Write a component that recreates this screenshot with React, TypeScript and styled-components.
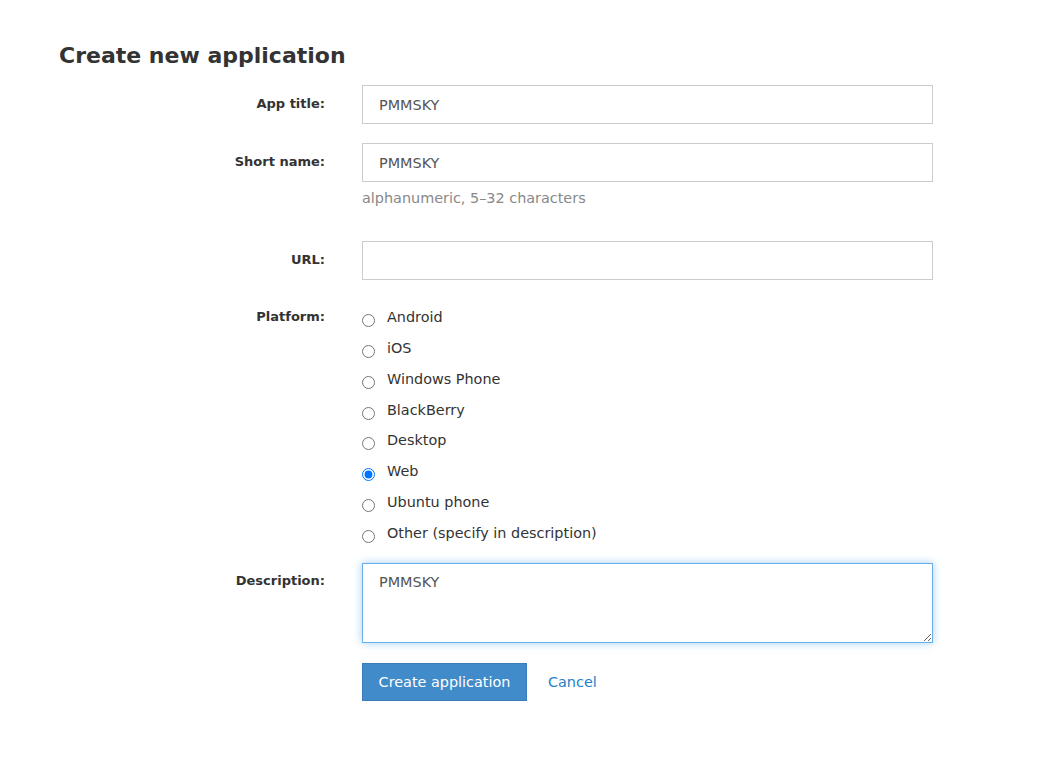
import React from "react";
import styled, { createGlobalStyle } from "styled-components";

const Global = createGlobalStyle`
  html, body { margin: 0; padding: 0; background: #fff; }
  body {
    font-family: "DejaVu Sans", Verdana, sans-serif;
    font-size: 14.4px;
    color: #333;
  }
  * { box-sizing: border-box; }
`;

const Page = styled.div`
  padding: 41px 0 40px 0;
`;

const Title = styled.h1`
  margin: 0 0 14px 59px;
  font-size: 22px;
  line-height: 30px;
  font-weight: bold;
  color: #333;
`;

const Form = styled.form`
  display: flex;
  flex-direction: column;
`;

const Row = styled.div<{ $mb: number }>`
  display: grid;
  grid-template-columns: 325px 571px;
  column-gap: 37px;
  margin-bottom: ${(p) => p.$mb}px;
`;

const Label = styled.label<{ $pt: number }>`
  text-align: right;
  font-weight: bold;
  font-size: 13px;
  padding-top: ${(p) => p.$pt}px;
  line-height: 20px;
  color: #333;
`;

const Field = styled.div`
  display: flex;
  flex-direction: column;
`;

const TextInput = styled.input`
  width: 100%;
  height: 39px;
  border: 1px solid #ccc;
  border-radius: 0;
  padding: 0 16px;
  font: inherit;
  color: #555;
  outline: none;
  background: #fff;
`;

const Hint = styled.div`
  margin-top: 6px;
  line-height: 20px;
  color: #888;
`;

const Radios = styled.div`
  display: flex;
  flex-direction: column;
`;

const RadioRow = styled.label`
  display: flex;
  align-items: flex-start;
  height: 30.86px;
  line-height: 20px;
  color: #333;
  cursor: pointer;
`;

const Radio = styled.input`
  margin: 7px 12px 0 0;
  width: 13px;
  height: 13px;
  flex: none;
`;

const TextArea = styled.textarea`
  width: 100%;
  height: 80px;
  border: 1px solid #66afe9;
  box-shadow: 0 0 8px rgba(102, 175, 233, 0.6);
  border-radius: 0;
  padding: 8px 16px;
  font: inherit;
  line-height: 20px;
  color: #555;
  outline: none;
  resize: vertical;
  display: block;
`;

const Actions = styled.div`
  display: flex;
  align-items: center;
  gap: 21px;
`;

const PrimaryButton = styled.button`
  height: 38px;
  width: 165px;
  background: #428bca;
  border: 1px solid #3a7db8;
  color: #fff;
  font: inherit;
  padding: 0 15px;
  cursor: pointer;
`;

const CancelLink = styled.a`
  color: #2481cc;
  text-decoration: none;
`;

const platforms = [
  "Android",
  "iOS",
  "Windows Phone",
  "BlackBerry",
  "Desktop",
  "Web",
  "Ubuntu phone",
  "Other (specify in description)",
];

export default function App() {
  return (
    <Page>
      <Global />
      <Title>Create new application</Title>
      <Form onSubmit={(e) => e.preventDefault()}>
        <Row $mb={19}>
          <Label $pt={9}>App title:</Label>
          <Field>
            <TextInput defaultValue="PMMSKY" />
          </Field>
        </Row>
        <Row $mb={33}>
          <Label $pt={9}>Short name:</Label>
          <Field>
            <TextInput defaultValue="PMMSKY" />
            <Hint>alphanumeric, 5–32 characters</Hint>
          </Field>
        </Row>
        <Row $mb={27}>
          <Label $pt={9}>URL:</Label>
          <Field>
            <TextInput defaultValue="" />
          </Field>
        </Row>
        <Row $mb={9}>
          <Label $pt={0}>Platform:</Label>
          <Radios>
            {platforms.map((p) => (
              <RadioRow key={p}>
                <Radio type="radio" name="platform" defaultChecked={p === "Web"} />
                {p}
              </RadioRow>
            ))}
          </Radios>
        </Row>
        <Row $mb={20}>
          <Label $pt={8}>Description:</Label>
          <Field>
            <TextArea defaultValue="PMMSKY" />
          </Field>
        </Row>
        <Row $mb={0}>
          <div />
          <Actions>
            <PrimaryButton type="submit">Create application</PrimaryButton>
            <CancelLink href="#">Cancel</CancelLink>
          </Actions>
        </Row>
      </Form>
    </Page>
  );
}
